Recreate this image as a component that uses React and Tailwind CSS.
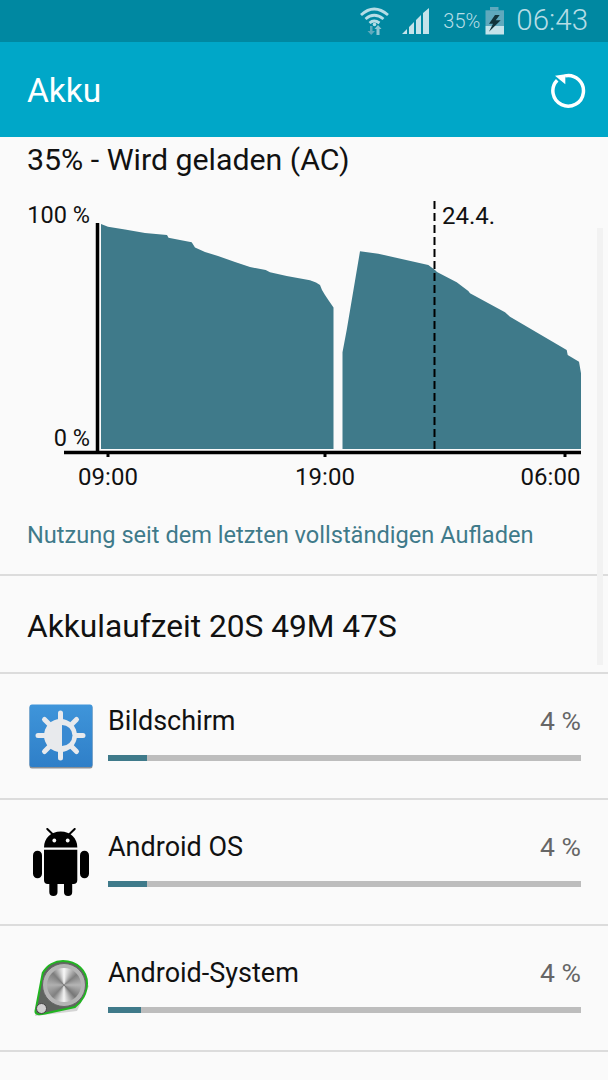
const apps = [
  { name: "Bildschirm", bar: "w-[39px]", icon: <ScreenIcon /> },
  { name: "Android OS", bar: "w-[39px]", icon: <AndroidIcon /> },
  { name: "Android-System", bar: "w-[33px]", icon: <SystemIcon /> },
];

const leftCurve =
  "M101 224L108 226.7L125 229.5L145 233L167 235L168.5 237.7L180 240L191.7 242.3L195 247.5L205 252L218 256L235 262L250 267L265.7 270L270 272.3L286.7 276L310 280.3L316 282.5L320 285L322 290L325 295L329 301L333.5 307.5L333.5 449L101 449Z";
const rightCurve =
  "M342.5 352.3L346.7 330L360 251.3L378.3 253.7L395 257.5L428.3 265L435 270L437 272L456.7 282.3L468.3 291L470 293.3L505 312.3L510 316.7L566.7 350L567.7 355L579 361.7L581 373.3L581 449L342.5 449Z";

function ScreenIcon() {
  return (
    <svg width="64" height="65" viewBox="0 0 64 65">
      <defs>
        <linearGradient id="screenBg" x1="0" y1="0" x2="0" y2="1">
          <stop offset="0" stopColor="#3f95da" />
          <stop offset="1" stopColor="#2f7fc8" />
        </linearGradient>
      </defs>
      <rect x="0.5" y="1.5" width="63" height="63" rx="2.5" fill="#8a9096" />
      <rect x="0.5" y="0.5" width="63" height="62.5" rx="2.5" fill="url(#screenBg)" />
      <g stroke="#e8eaed" strokeWidth="5" strokeLinecap="round">
        <path d="M31.5 9V54M9 31.5H54M15.5 15.5L47.5 47.5M47.5 15.5L15.5 47.5" />
      </g>
      <circle cx="31.5" cy="31.5" r="16.5" fill="#e8eaed" />
      <path d="M33 21A10.5 10.5 0 0 1 33 42Z" fill="#3a8ad2" />
    </svg>
  );
}

function AndroidIcon() {
  return (
    <svg width="56" height="68" viewBox="0 0 56 68" fill="#000" className="ml-[4px]">
      <path d="M14.3 1L20 6.5M41.7 1L36 6.5" stroke="#000" strokeWidth="2" strokeLinecap="round" />
      <path d="M11 19.5C11 10 18 3.5 27.7 3.5C37.4 3.5 44.3 10 44.3 19.5Z" />
      <circle cx="21.3" cy="12.5" r="1.9" fill="#fafafa" />
      <circle cx="34.7" cy="12.5" r="1.9" fill="#fafafa" />
      <path d="M11 21.7H44.3V52C44.3 54.5 43 56 40.5 56H14.8C12.3 56 11 54.5 11 52Z" />
      <rect x="0" y="22.7" width="9" height="27.5" rx="4.5" />
      <rect x="47" y="22.7" width="9" height="27.5" rx="4.5" />
      <rect x="16.3" y="50" width="8.2" height="18" rx="4.1" />
      <rect x="31" y="50" width="8.2" height="18" rx="4.1" />
    </svg>
  );
}

function SystemIcon() {
  return (
    <div className="relative w-[58px] h-[60px] ml-[3px]">
      <svg width="58" height="60" viewBox="0 0 58 60" className="absolute inset-0">
        <path d="M3 58L11 18L32 6L57 28L45 53Z" fill="#000" opacity="0.15" />
        <path
          d="M3.5 53L10.7 15C15 7 23 3 31 3C45 3 55 13 55 25.3C55 35 50 44 43 49L13 55.5C7 57 3 56.5 3.5 53Z"
          fill="#5f635f"
          stroke="#22b522"
          strokeWidth="2"
        />
      </svg>
      <div className="absolute left-[10px] top-[5px] w-[44px] h-[44px] rounded-full border border-[#666] bg-[#b5b5b5] flex items-center justify-center">
        <div className="w-[34px] h-[34px] rounded-full bg-[conic-gradient(#f8f8f8,#808080_14%,#b5b5b5_25%,#777_38%,#f4f4f4_50%,#808080_62%,#b0b0b0_75%,#7d7d7d_88%,#f8f8f8)]" />
      </div>
      <div className="absolute left-[4px] top-[45px] w-[11px] h-[11px] rounded-full border border-[#444] bg-[#cfcfcf]" />
    </div>
  );
}

function BatteryChart() {
  return (
    <svg width="608" height="305" viewBox="0 190 608 305" className="block font-['Roboto']">
      <path d={leftCurve} fill="#3f7a8a" />
      <path d={rightCurve} fill="#3f7a8a" />
      <path d="M97.5 223V453" stroke="#000" strokeWidth="3.5" />
      <path d="M64 452.5H581" stroke="#000" strokeWidth="3.5" />
      <path d="M108 454V457M325 454V457M565 454V457" stroke="#000" strokeWidth="3" />
      <path d="M434.5 201V449" stroke="#000" strokeWidth="2" strokeDasharray="8 4" />
      <text x="90" y="223" textAnchor="end" fontSize="23.5" fill="#111">100 %</text>
      <text x="90" y="446" textAnchor="end" fontSize="23.5" fill="#111">0 %</text>
      <text x="442" y="224" fontSize="24" fill="#111">24.4.</text>
      <text x="108" y="485" textAnchor="middle" fontSize="24" fill="#111">09:00</text>
      <text x="325" y="485" textAnchor="middle" fontSize="24" fill="#111">19:00</text>
      <text x="550.5" y="485" textAnchor="middle" fontSize="24" fill="#111">06:00</text>
    </svg>
  );
}

function StatusBar() {
  return (
    <div className="h-[42px] bg-[#0088a1] flex items-center justify-end text-[#b6dde6]">
      <svg width="29" height="30" viewBox="0 0 29 30" className="mr-[13px] mb-[2px]" fill="none">
        <path d="M1 10Q14 -2 28 10M5.5 14Q14 6.5 23.5 14M9.5 18Q14 14 19.5 18" stroke="#b6dde6" strokeWidth="2.8" />
        <circle cx="14.5" cy="19.5" r="1.8" fill="#b6dde6" />
        <path d="M12.5 21H10V26H7.5L11.2 30L15 26H12.5Z" fill="#5ea9bc" />
        <path d="M18 20L14.5 24H16.5V30H19.5V24H21.5Z" fill="#8fc7d4" />
      </svg>
      <svg width="28" height="27" viewBox="0 0 28 27" className="mr-[13px]" fill="#c5e3ea">
        <path d="M0 26L5 21V26ZM7 19L12 14V26H7ZM14 12L19 7V26H14ZM21 5L27 0V26H21Z" />
      </svg>
      <span className="text-[20px] font-light mr-[5px] leading-none">35%</span>
      <svg width="20" height="28" viewBox="0 0 20 28" className="mr-[11px]">
        <rect x="5" y="0" width="8.5" height="3.3" fill="#5fa9bd" />
        <rect x="0.5" y="3.3" width="18.5" height="15.7" fill="#5fa9bd" />
        <rect x="0.5" y="19" width="18.5" height="8.5" fill="#c5e3ea" />
        <path d="M10 8L4 16.7H8L4 24.7L15.7 13.3H10.7L14.7 8Z" fill="#12343b" />
      </svg>
      <span className="text-[29.5px] font-light mr-[20px] leading-none">06:43</span>
    </div>
  );
}

export default function App() {
  return (
    <div className="relative w-[608px] h-[1080px] overflow-hidden bg-[#fafafa] font-['Roboto',sans-serif] text-[#111]">
      <StatusBar />
      <div className="h-[95px] bg-[#00a7c8] flex items-center justify-between pl-[27px] pr-[22px] text-white">
        <span className="text-[33.5px] leading-none mt-[2px]">Akku</span>
        <svg width="36" height="40" viewBox="0 0 36 40" fill="none" stroke="#fff" strokeWidth="3.5" className="mt-[2px]">
          <path d="M15 4.9A15.3 15.3 0 1 1 7.2 9.2" />
          <path d="M5 4.7L15.3 3.3V13.3Z" fill="#fff" stroke="none" />
        </svg>
      </div>

      <div className="h-[53px] pl-[27px] flex items-center">
        <span className="text-[30.3px] leading-none mt-[-6px]">35% - Wird geladen (AC)</span>
      </div>

      <BatteryChart />

      <div className="h-[81px] pl-[27px] flex items-start border-b-2 border-[#dcdcdc]">
        <span className="text-[23.6px] leading-[28px] text-[#3f7a8a] mt-[26px]">
          Nutzung seit dem letzten vollständigen Aufladen
        </span>
      </div>

      <div className="h-[98px] pl-[27px] flex items-center border-b-2 border-[#dcdcdc]">
        <span className="text-[31.7px] leading-none mt-[6px]">Akkulaufzeit 20S 49M 47S</span>
      </div>

      {apps.map((app) => (
        <div key={app.name} className="h-[126px] flex items-center border-b-2 border-[#dcdcdc] pl-[29px] pr-[27px]">
          <div className="w-[79px] shrink-0">{app.icon}</div>
          <div className="flex-1 pb-[11px]">
            <div className="flex items-center justify-between h-[42px]">
              <span className="text-[27px] leading-none">{app.name}</span>
              <span className="text-[26.5px] leading-none text-[#666]">4 %</span>
            </div>
            <div className="h-[6px] mt-[13px] bg-[#bdbdbd]">
              <div className={`h-full bg-[#3f7a8a] ${app.bar}`} />
            </div>
          </div>
        </div>
      ))}

      <div className="absolute left-[597px] top-[228px] w-[6px] h-[437px] bg-[#f2f2f2]" />
    </div>
  );
}
